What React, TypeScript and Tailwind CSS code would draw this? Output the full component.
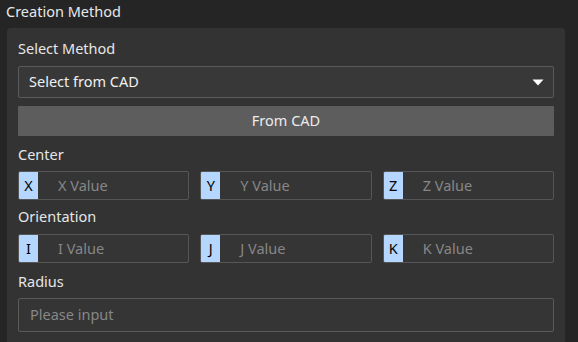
import React from 'react';

const FONT = { fontFamily: '"Noto Sans", "Open Sans", sans-serif' };

function AxisInput({ axis }: { axis: string }) {
  return (
    <div className="flex h-[29px] flex-1 rounded-[2px] border border-[#565656] bg-[#353535] overflow-hidden">
      <div className="flex w-[19px] items-center justify-center bg-[#b5d6ff] text-black">
        {axis}
      </div>
      <div className="flex items-center pl-[20px] text-[#878787]">{axis} Value</div>
    </div>
  );
}

export default function App() {
  return (
    <div className="h-[342px] w-[578px] overflow-hidden bg-[#252525] text-[14.5px]" style={FONT}>
      <div className="h-[28px] pl-[6px] pt-[1px] leading-[20px] text-[#e8e8e8]">Creation Method</div>
      <div className="ml-[7px] mr-[13px] h-[320px] rounded-t-[4px] bg-[#333333] px-[11px] pt-[10px]">
        <div className="leading-[20px] text-[#e6e6e6]">Select Method</div>
        <div className="mt-[8px] flex h-[32px] items-center justify-between rounded-[2px] border border-[#5a5a5a] bg-[#383838] pl-[10px] pr-[9px] text-[#f0f0f0]">
          <span>Select from CAD</span>
          <svg width="12" height="7" viewBox="0 0 12 7">
            <path d="M0.5 0.5 L11.5 0.5 L6 6.5 Z" fill="#ffffff" />
          </svg>
        </div>
        <div className="mt-[8px] flex h-[30px] items-center justify-center rounded-[1px] bg-[#5d5d5d] text-[#ececec]">
          From CAD
        </div>
        <div className="mt-[8px] leading-[20px] text-[#e6e6e6]">Center</div>
        <div className="mt-[7px] flex gap-[11px]">
          <AxisInput axis="X" />
          <AxisInput axis="Y" />
          <AxisInput axis="Z" />
        </div>
        <div className="mt-[6px] leading-[20px] text-[#e6e6e6]">Orientation</div>
        <div className="mt-[8px] flex gap-[11px]">
          <AxisInput axis="I" />
          <AxisInput axis="J" />
          <AxisInput axis="K" />
        </div>
        <div className="mt-[8px] leading-[20px] text-[#e6e6e6]">Radius</div>
        <div className="mt-[7px] flex h-[34px] items-center rounded-[2px] border border-[#5a5a5a] bg-[#353535] pl-[11px] text-[#878787]">
          Please input
        </div>
      </div>
    </div>
  );
}
